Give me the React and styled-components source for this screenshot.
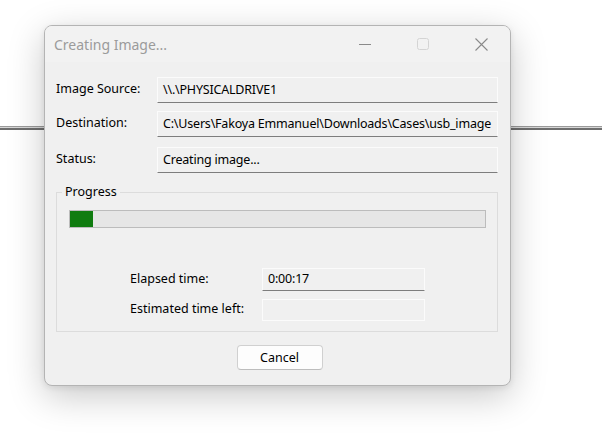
import React from 'react';
import styled, {createGlobalStyle} from 'styled-components';

const Global = createGlobalStyle`
    html, body { margin:0; padding:0; background:#ffffff; }
    body { font-family:"Noto Sans", "Segoe UI", sans-serif; }
`;

const Desktop = styled.div`
    width:602px;
    height:434px;
    overflow:hidden;
    padding:25px 0 0 44px;
    box-sizing:border-box;
    background:
        linear-gradient(to bottom,
            transparent 126px, #9a9a9a 126px, #9a9a9a 127px,
            #d6d6d6 127px, #d6d6d6 128px,
            #6e6e6e 128px, #6e6e6e 130px, transparent 130px) no-repeat,
        #ffffff;
`;

const Window = styled.div`
    width:467px;
    height:361px;
    box-sizing:border-box;
    border:1px solid #b4b4b4;
    border-radius:8px;
    background:#f0f0f0;
    box-shadow:0 10px 36px rgba(0,0,0,0.22), 0 2px 6px rgba(0,0,0,0.08);
    display:flex;
    flex-direction:column;
    overflow:hidden;
`;

const TitleBar = styled.div`
    height:36px;
    display:flex;
    align-items:center;
    background:#f2f2f2;
`;

const Title = styled.div`
    flex:1;
    padding-left:9px;
    font-size:14px;
    color:#9b9b9b;
`;

const CtrlButton = styled.div`
    width:58px;
    height:36px;
    display:flex;
    align-items:center;
    justify-content:center;
`;

const Body = styled.div`
    flex:1;
    display:flex;
    flex-direction:column;
    padding:15px 12px 0 11px;
`;

const InfoGrid = styled.div`
    display:grid;
    grid-template-columns:101px 1fr;
    row-gap:8px;
    align-items:center;
`;

const Label = styled.div`
    font-size:12.5px;
    color:#000;
    white-space:nowrap;
    margin-top:${p => p.mt || '0'};
    padding-bottom:3px;
`;

const Field = styled.div`
    height:${p => p.h || '26px'};
    margin-top:${p => p.mt || '0'};
    box-sizing:border-box;
    border:1px solid #fbfbfb;
    border-bottom-color:${p => p.disabled ? '#fbfbfb' : '#7d7d7d'};
    background:#f0f0f0;
    font-size:12.5px;
    letter-spacing:-0.2px;
    color:#000;
    display:flex;
    align-items:center;
    padding:0 0 2px 5px;
    white-space:nowrap;
    overflow:hidden;
`;

const Group = styled.fieldset`
    margin:10px 0 0 0;
    padding:9px 11px 10px 12px;
    border:1px solid #dcdcdc;
    min-inline-size:0;
`;

const Legend = styled.legend`
    margin-left:-7px;
    padding:0 3px;
    font-size:12.5px;
    line-height:18px;
    color:#000;
`;

const Bar = styled.div`
    height:18px;
    box-sizing:border-box;
    border:1px solid #bcbcbc;
    background:#e6e6e6;
    display:flex;
`;

const BarFill = styled.div`
    background:#107c10;
`;

const TimeGrid = styled.div`
    margin:40px 0 0 61px;
    display:grid;
    grid-template-columns:132px 163px;
    grid-template-rows:23px 22px;
    row-gap:8px;
    align-items:center;
`;

const Footer = styled.div`
    display:flex;
    justify-content:center;
    padding:13px 0 0 5px;
`;

const Button = styled.button`
    width:86px;
    height:25px;
    border:1px solid #d0d0d0;
    border-bottom-color:#bdbdbd;
    border-radius:4px;
    background:#fdfdfd;
    font-family:inherit;
    font-size:12.5px;
    color:#000;
    padding:0;
`;

const MinIcon = () => (
    <svg width="12" height="12" viewBox="0 0 12 12">
        <line x1="0" y1="6.5" x2="12" y2="6.5" stroke="#8a8a8a" strokeWidth="1" />
    </svg>
);

const MaxIcon = () => (
    <svg width="12" height="12" viewBox="0 0 12 12">
        <rect x="0.5" y="0.5" width="11" height="11" rx="2" fill="none" stroke="#d4d4d4" strokeWidth="1" />
    </svg>
);

const CloseIcon = () => (
    <svg width="13" height="13" viewBox="0 0 13 13">
        <path d="M0.5 0.5 L12.5 12.5 M12.5 0.5 L0.5 12.5" stroke="#8a8a8a" strokeWidth="1.1" fill="none" />
    </svg>
);

const App = ({progress = 23}) => {
    return <Desktop>
        <Global />
        <Window>
            <TitleBar>
                <Title>Creating Image...</Title>
                <CtrlButton><MinIcon /></CtrlButton>
                <CtrlButton><MaxIcon /></CtrlButton>
                <CtrlButton><CloseIcon /></CtrlButton>
            </TitleBar>
            <Body>
                <InfoGrid>
                    <Label>Image Source:</Label>
                    <Field>\\.\PHYSICALDRIVE1</Field>
                    <Label>Destination:</Label>
                    <Field>C:\Users\Fakoya Emmanuel\Downloads\Cases\usb_image</Field>
                    <Label mt="2px">Status:</Label>
                    <Field mt="2px">Creating image...</Field>
                </InfoGrid>
                <Group>
                    <Legend>Progress</Legend>
                    <Bar>
                        <BarFill style={{width: progress}} />
                    </Bar>
                    <TimeGrid>
                        <Label>Elapsed time:</Label>
                        <Field h="23px">0:00:17</Field>
                        <Label>Estimated time left:</Label>
                        <Field h="22px" disabled></Field>
                    </TimeGrid>
                </Group>
                <Footer>
                    <Button>Cancel</Button>
                </Footer>
            </Body>
        </Window>
    </Desktop>
}

export default App;
